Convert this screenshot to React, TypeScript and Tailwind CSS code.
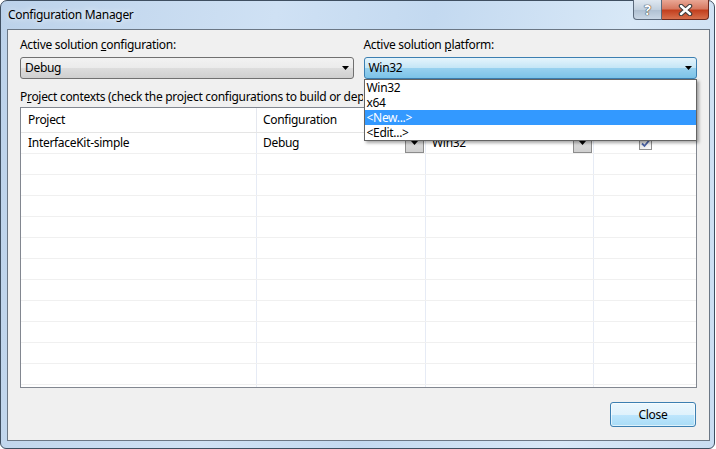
import React from 'react';

const ROWS = Array.from({ length: 13 });

function Arrow() {
  return (
    <svg width="7" height="4" viewBox="0 0 7 4">
      <path d="M0 0h7L3.5 4z" fill="#000" />
    </svg>
  );
}

function CellButton() {
  return (
    <div className="w-[19px] h-[19px] flex items-center justify-center border border-[#8c8c8c] bg-[linear-gradient(#e6e6e6,#cfcfcf)]">
      <Arrow />
    </div>
  );
}

export default function App() {
  return (
    <div className="w-[716px] h-[449px] bg-white font-['Noto_Sans',sans-serif] text-[12px] tracking-[-0.3px] text-black">
      <div className="w-[715px] h-[449px] flex flex-col rounded-t-[7px] rounded-b-[6px] border border-[#3f4f61] bg-[linear-gradient(100deg,#bcd2ea_0%,#cfe1f4_35%,#c3d9f0_55%,#d8e8f7_80%,#c9ddf2_100%)]">
        {/* Title bar */}
        <div className="h-[28px] flex items-start">
          <span className="pl-[7px] pt-[6px] leading-[16px] [text-shadow:0_0_6px_#ffffff]">Configuration Manager</span>
          <div className="ml-auto mr-[5px] -mt-px flex">
            <div className="w-[29px] h-[20px] flex items-center justify-center rounded-bl-[4px] border border-[#5b6a7c] border-t-0 bg-[linear-gradient(#dfe8f1,#c2d0de_50%,#aebfd1_51%,#c9d7e5)]">
              <span className="text-[14px] leading-none font-bold text-white [text-shadow:0_0_1px_#222,0_0_1px_#222]">?</span>
            </div>
            <div className="w-[47px] h-[20px] flex items-center justify-center rounded-br-[4px] border border-[#6e2a1e] border-t-0 border-l-0 bg-[linear-gradient(#e9a795,#d77a62_45%,#c2401f_55%,#d8704d)]">
              <svg width="15" height="12" viewBox="0 0 15 12">
                <path d="M3 2l9 8M12 2l-9 8" stroke="#3b3b3b" strokeWidth="4.5" strokeLinecap="round" />
                <path d="M3 2l9 8M12 2l-9 8" stroke="#ffffff" strokeWidth="2.4" strokeLinecap="round" />
              </svg>
            </div>
          </div>
        </div>

        {/* Client area */}
        <div className="ml-[6px] mr-[4px] flex-1 flex flex-col border border-[#6b7785] bg-[#f0f0f0] px-[12px] pt-[7px]">
          <div className="grid grid-cols-2 gap-x-[10px]">
            <div>
              <div className="h-[16px] leading-[16px]">
                Active solution <span className="underline">c</span>onfiguration:
              </div>
              <div className="mt-[4px] h-[22px] flex items-center justify-between rounded-[3px] border border-[#707070] bg-[linear-gradient(#f2f2f2,#ebebeb_50%,#dddddd_51%,#cfcfcf)] pl-[4px] pr-[4px]">
                <span>Debug</span>
                <Arrow />
              </div>
            </div>
            <div className="relative">
              <div className="h-[16px] leading-[16px]">
                Active solution <span className="underline">p</span>latform:
              </div>
              <div className="mt-[4px] h-[22px] flex items-center justify-between rounded-[3px] border border-[#3c7fb1] bg-[linear-gradient(#e5f4fc,#c4e5f6_50%,#98d1ef_51%,#7cc3e8)] pl-[4px] pr-[4px]">
                <span>Win32</span>
                <Arrow />
              </div>
              {/* Open list */}
              <div className="absolute top-full left-0 right-0 z-10 border border-[#646464] bg-white shadow-[2px_2px_3px_rgba(0,0,0,0.35)]">
                <div className="h-[15px] leading-[15px] pl-[2px]">Win32</div>
                <div className="h-[15px] leading-[15px] pl-[2px]">x64</div>
                <div className="h-[15px] leading-[15px] pl-[2px] bg-[#3399ff] text-white">&lt;New...&gt;</div>
                <div className="h-[15px] leading-[15px] pl-[2px]">&lt;Edit...&gt;</div>
              </div>
            </div>
          </div>

          <div className="mt-[10px] w-[343px] h-[16px] leading-[16px] whitespace-nowrap overflow-hidden">
            P<span className="underline">r</span>oject contexts (check the project configurations to build or deploy):
          </div>

          {/* Grid */}
          <div className="mt-[2px] h-[281px] overflow-hidden border border-[#828790] bg-white">
            <div className="grid grid-cols-[236px_169px_168px_1fr] h-[25px] border-b border-[#e5e5e5]">
              <div className="border-r border-[#e5e8ef] pl-[7px] leading-[24px]">Project</div>
              <div className="border-r border-[#e5e8ef] pl-[6px] leading-[24px]">Configuration</div>
              <div className="border-r border-[#e5e8ef]" />
              <div />
            </div>
            {ROWS.map((_, i) => (
              <div key={i} className="grid grid-cols-[236px_169px_168px_1fr] h-[21px] border-b border-[#f0f0f0]">
                <div className="border-r border-[#e6ebf5] pl-[7px] leading-[20px]">{i === 0 ? 'InterfaceKit-simple' : ''}</div>
                <div className="border-r border-[#e6ebf5] flex items-center justify-between pl-[6px] pr-[1px]">
                  {i === 0 && (
                    <>
                      <span>Debug</span>
                      <CellButton />
                    </>
                  )}
                </div>
                <div className="border-r border-[#e6ebf5] flex items-center justify-between pl-[6px] pr-[1px]">
                  {i === 0 && (
                    <>
                      <span>Win32</span>
                      <CellButton />
                    </>
                  )}
                </div>
                <div className="flex items-center justify-center">
                  {i === 0 && (
                    <div className="w-[13px] h-[13px] flex items-center justify-center border border-[#8f8f8f] bg-[linear-gradient(135deg,#dcdcdc,#fbfbfb)]">
                      <svg width="9" height="9" viewBox="0 0 9 9">
                        <path d="M1 4.5l2.5 2.5L8 1.5" fill="none" stroke="#4a62a4" strokeWidth="1.8" />
                      </svg>
                    </div>
                  )}
                </div>
              </div>
            ))}
          </div>

          <div className="mt-[14px] flex justify-end pr-[1px]">
            <div className="w-[86px] h-[25px] flex items-center justify-center rounded-[3px] border border-[#3c7fb1] bg-[linear-gradient(#ecf7fd,#dff2fc_50%,#bee6fd_51%,#a9dcf6)] shadow-[inset_0_0_0_1px_rgba(255,255,255,0.6)]">
              Close
            </div>
          </div>
        </div>
        <div className="h-[7px]" />
      </div>
    </div>
  );
}
